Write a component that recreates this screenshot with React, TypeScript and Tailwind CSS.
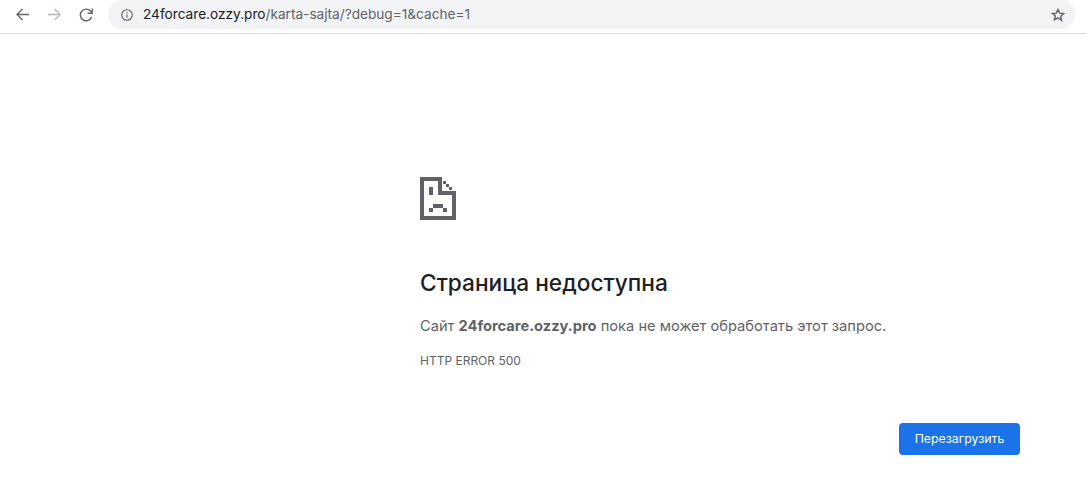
import React from "react";

function SadDoc() {
  const r: [number, number, number, number][] = [
    [0, 0, 21, 4],
    [0, 0, 4, 43],
    [0, 39, 36, 4],
    [32, 16, 4, 27],
    [18, 0, 4, 18],
    [18, 14, 18, 4],
    [23, 4, 3, 3],
    [26, 7, 3, 3],
    [29, 10, 3, 3],
    [9, 10, 4, 8],
    [13, 27, 10, 4],
    [9, 31, 4, 4],
    [23, 31, 4, 4],
  ];
  return (
    <svg width="36" height="43" viewBox="0 0 36 43" shapeRendering="crispEdges" fill="#5f6368">
      {r.map(([x, y, w, h], i) => (
        <rect key={i} x={x} y={y} width={w} height={h} />
      ))}
    </svg>
  );
}

export default function App() {
  return (
    <div className="h-[494px] w-[1086px] overflow-hidden bg-white font-['Inter',sans-serif]">
      <div className="flex h-[34px] items-start border-b border-[#dadce0] pl-[16px] pr-[11px]">
        <div className="flex h-[29px] items-center">
          <svg width="13" height="13" viewBox="0 0 13 13" fill="none" stroke="#5f6368" strokeWidth="1.3">
            <path d="M13 6.5H1M6.5 1L1 6.5 6.5 12" />
          </svg>
          <svg className="ml-[19px]" width="13" height="13" viewBox="0 0 13 13" fill="none" stroke="#b5b8bc" strokeWidth="1.3">
            <path d="M0 6.5h12M6.5 1L12 6.5 6.5 12" />
          </svg>
          <svg className="ml-[18px]" width="14" height="14" viewBox="0 0 14 14" fill="none" stroke="#5f6368" strokeWidth="1.4">
            <path d="M12.6 9A5.8 5.8 0 1 1 11.4 3L13 4.6" />
            <path d="M13.2 .6v4.6H8.6" />
          </svg>
        </div>
        <div className="ml-[15px] flex h-[29px] flex-1 items-center rounded-b-[15px] rounded-t-[15px] bg-[#f1f3f4] pl-[13px] pr-[10px]">
          <svg width="12" height="12" viewBox="0 0 12 12" fill="none" stroke="#5f6368" strokeWidth="1.1">
            <circle cx="6" cy="6" r="5.3" />
            <path d="M6 5.2v3.6M6 3v1.3" />
          </svg>
          <div className="ml-[10px] flex-1 text-[13.65px] text-[#202124]">
            24forcare.ozzy.pro<span className="text-[#5f6368]">/karta-sajta/?debug=1&amp;cache=1</span>
          </div>
          <svg width="14" height="14" viewBox="0 0 24 24" fill="none" stroke="#5f6368" strokeWidth="2.4">
            <path d="M12 2.5l2.9 6.3 6.9.8-5.1 4.7 1.4 6.8L12 16.8l-6.1 3.3 1.4-6.8L2.2 9.6l6.9-.8z" />
          </svg>
        </div>
      </div>

      <div className="ml-[420px] w-[600px] pt-[143px]">
        <SadDoc />
        <h1 className="mt-[48px] text-[22.7px] font-medium leading-[30px] text-[#202124]">Страница недоступна</h1>
        <p className="mt-[18px] text-[14.67px] leading-[20px] text-[#5f6368]">
          Сайт <b className="font-bold">24forcare.ozzy.pro</b> пока не может обработать этот запрос.
        </p>
        <div className="mt-[17px] text-[12px] leading-[16px] text-[#5f6368]">HTTP ERROR 500</div>
        <div className="mt-[54px] flex w-[600px] justify-end">
          <button className="h-[32px] w-[121px] rounded-[4px] bg-[#1a73e8] text-[12.3px] text-white">Перезагрузить</button>
        </div>
      </div>
    </div>
  );
}
